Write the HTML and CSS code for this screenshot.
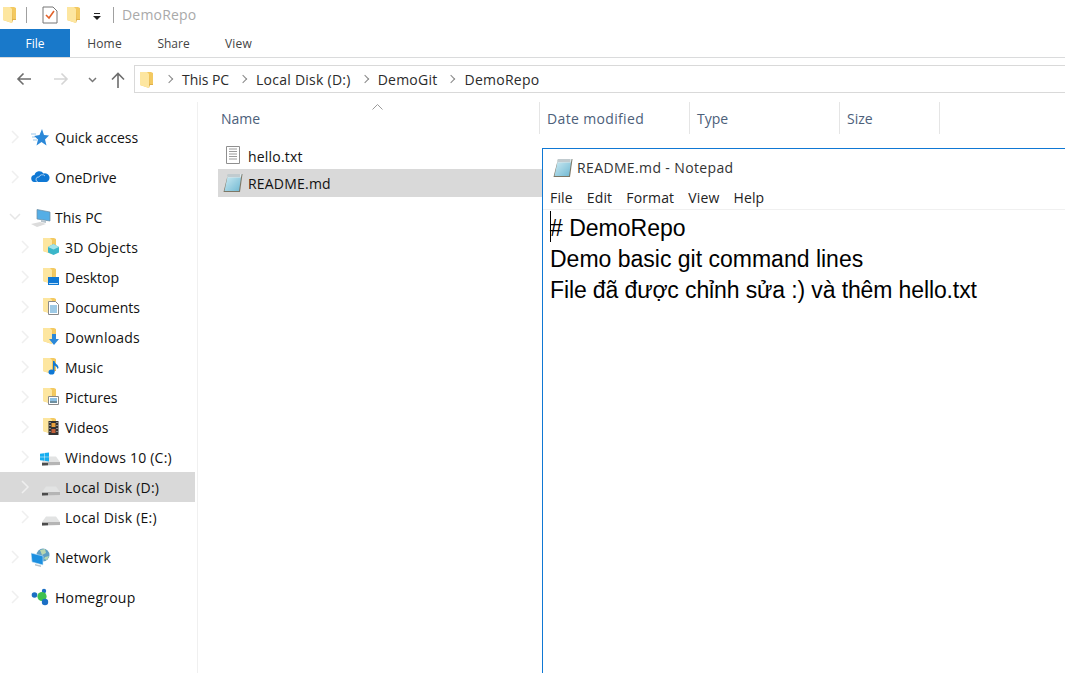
FILE: index.html
```html
<!DOCTYPE html>
<html lang="en">
<head>
    <meta charset="UTF-8">
    <meta name="viewport" content="width=device-width, initial-scale=1.0">
    <title>DemoRepo</title>
    <link rel="stylesheet" href="styles.css">
</head>
<body>

    <!-- Shared icons -->
    <svg class="defs" width="0" height="0">
        <defs>
            <linearGradient id="padfill" x1="0" y1="0" x2="1" y2="1">
                <stop offset="0" stop-color="#d4eef5"/>
                <stop offset="1" stop-color="#6fb8d2"/>
            </linearGradient>
            <symbol id="folder" viewBox="0 0 13 17">
                <path d="M0 1h11l2 1v12H9v3l-9-3z" fill="#f3c961"/>
                <path d="M0 1h7l2 2v14l-9-3z" fill="#fde6a0"/>
                <path d="M9 3v14l1-3h3v-1H9.500z" fill="#e0b04a"/>
            </symbol>
            <symbol id="drive" viewBox="0 0 20 12">
                <path d="M5 1.500h10l4 5.500H1z" fill="#e2e3e3"/>
                <path d="M1 7h18v3L1 10.500z" fill="#b5b5b5"/>
                <path d="M1 8h6v2.300L1 10.500z" fill="#4c4c4c"/>
            </symbol>
            <symbol id="note" viewBox="0 0 20 20">
                <path d="M5 1h14.500L17 19H.5z" fill="#7d7766"/>
                <path d="M5 1h13.500L16 18H1.500z" fill="url(#padfill)"/>
                <path d="M5 1h13.500l-.6 3.500H4.300z" fill="#dfe6e8"/>
                <path d="M6 1v3M8 1v3M10 1v3M12 1v3M14 1v3M16 1v3" stroke="#8a9aa0" stroke-width=".7"/>
            </symbol>
            <symbol id="chev-r" viewBox="0 0 10 16">
                <path d="M2 2l6 6-6 6" fill="none" stroke="#efefef" stroke-width="1.500"/>
            </symbol>
        </defs>
    </svg>

    <header class="titlebar">
        <svg class="folder-ico first" width="13" height="17"><use href="#folder"/></svg>
        <span class="tb-sep sep-a"></span>
        <svg class="check" width="16" height="18" viewBox="0 0 16 18">
            <path d="M1 1h10l4 4v12H1z" fill="#fff" stroke="#777"/>
            <path d="M4 9l3 3 5-7" fill="none" stroke="#e2622b" stroke-width="1.600"/>
        </svg>
        <svg class="folder-ico qa-folder" width="13" height="17"><use href="#folder"/></svg>
        <svg class="qa-drop" width="8" height="7" viewBox="0 0 8 7">
            <path d="M1 0h6v1H1zM0 3h8L4 7z" fill="#222"/>
        </svg>
        <span class="tb-sep sep-b"></span>
        <span class="win-title">DemoRepo</span>
    </header>

    <nav class="ribbon">
        <span class="tab tab-file">File</span>
        <span class="tab tab-home">Home</span>
        <span class="tab tab-share">Share</span>
        <span class="tab tab-view">View</span>
    </nav>

    <div class="addressrow">
        <svg class="nav-arrow back" width="16" height="14" viewBox="0 0 16 14">
            <path d="M15 7H2M7.500 1.500L2 7l5.500 5.500" fill="none" stroke="#6d6d6d" stroke-width="1.600"/>
        </svg>
        <svg class="nav-arrow forward" width="16" height="14" viewBox="0 0 16 14">
            <path d="M1 7h13M8.500 1.500L14 7l-5.500 5.500" fill="none" stroke="#d5d5d5" stroke-width="1.600"/>
        </svg>
        <svg class="nav-arrow recent" width="9" height="6" viewBox="0 0 9 6">
            <path d="M1 1l3.500 3.500L8 1" fill="none" stroke="#777" stroke-width="1.500"/>
        </svg>
        <svg class="nav-arrow up" width="14" height="16" viewBox="0 0 14 16">
            <path d="M7 16V2M1 7.500L7 1.500l6 6" fill="none" stroke="#6d6d6d" stroke-width="1.600"/>
        </svg>
        <div class="addressbar">
            <svg class="folder-ico" width="13" height="17"><use href="#folder"/></svg>
            <span class="crumb-sep first-sep"></span><span class="crumb-pc">This PC</span>
            <span class="crumb-sep"></span><span>Local Disk (D:)</span>
            <span class="crumb-sep"></span><span>DemoGit</span>
            <span class="crumb-sep"></span><span>DemoRepo</span>
        </div>
    </div>

    <main class="explorer">
        <aside class="sidebar">
            <div class="tree-item top">
                <svg class="chev" width="10" height="16"><use href="#chev-r"/></svg>
                <svg class="tree-ico" width="18" height="17" viewBox="0 0 18 17">
                    <path d="M11 0l2 6 5 .5-4 4 1.500 6-5-3.500-5 3.500L7 10.500 3 7l5.500-1z" fill="#2b88d8"/>
                    <path d="M0 5h5M1 8h3M2 11h4" stroke="#9cc7ea"/>
                </svg>
                <span>Quick access</span>
            </div>
            <div class="tree-item top">
                <svg class="chev" width="10" height="16"><use href="#chev-r"/></svg>
                <svg class="tree-ico cloud" width="19" height="12" viewBox="0 0 19 12">
                    <path d="M4 12a3.500 3.500 0 0 1-.5-7A5 5 0 0 1 12.500 3.500 4 4 0 0 1 15.500 12z" fill="#0f78d4"/>
                    <path d="M7 12a2.500 2.500 0 0 1 1-5 3.500 3.500 0 0 1 6-1" fill="none" stroke="#fff" stroke-width=".6"/>
                </svg>
                <span>OneDrive</span>
            </div>
            <div class="tree-item top open">
                <svg class="chev-down" width="12" height="8" viewBox="0 0 12 8">
                    <path d="M1 1l5 5 5-5" fill="none" stroke="#e6e6e6" stroke-width="1.500"/>
                </svg>
                <svg class="tree-ico" width="20" height="18" viewBox="0 0 20 18">
                    <path d="M6 .500L19 3v9L6 10z" fill="#55aee6" stroke="#6c8ba0" stroke-width=".7"/>
                    <path d="M10 11l5 1v2l-5-1z" fill="#b8c4cc"/>
                    <path d="M0 15l9-2 6 2-9 3z" fill="#dcdcdc"/>
                </svg>
                <span>This PC</span>
            </div>

            <div class="tree-item sub">
                <svg class="chev" width="10" height="16"><use href="#chev-r"/></svg>
                <span class="lib-ico">
                    <svg width="13" height="17"><use href="#folder"/></svg>
                    <svg class="badge" width="11" height="11" viewBox="0 0 11 11">
                        <path d="M5.500 0L11 3v5.500L5.500 11 0 8.500V3z" fill="#3bb6c9"/>
                        <path d="M5.500 0L11 3 5.500 5.500 0 3z" fill="#a3e3ea"/>
                    </svg>
                </span>
                <span class="wide">3D Objects</span>
            </div>
            <div class="tree-item sub">
                <svg class="chev" width="10" height="16"><use href="#chev-r"/></svg>
                <span class="lib-ico">
                    <svg width="13" height="17"><use href="#folder"/></svg>
                    <svg class="badge" width="11" height="8" viewBox="0 0 11 8">
                        <path d="M0 0h11v8H0z" fill="#0f78d4"/>
                        <path d="M1 6h9v1H1z" fill="#bfe0f5"/>
                    </svg>
                </span>
                <span>Desktop</span>
            </div>
            <div class="tree-item sub">
                <svg class="chev" width="10" height="16"><use href="#chev-r"/></svg>
                <span class="lib-ico">
                    <svg width="13" height="17"><use href="#folder"/></svg>
                    <svg class="badge" width="11" height="14" viewBox="0 0 11 14">
                        <path d="M.5.500h7l3 3v10H.5z" fill="#fff" stroke="#8a8a8a"/>
                        <path d="M2 5h7M2 7h7M2 9h7M2 11h7" stroke="#3c94cc"/>
                    </svg>
                </span>
                <span>Documents</span>
            </div>
            <div class="tree-item sub">
                <svg class="chev" width="10" height="16"><use href="#chev-r"/></svg>
                <span class="lib-ico">
                    <svg width="13" height="17"><use href="#folder"/></svg>
                    <svg class="badge" width="10" height="11" viewBox="0 0 10 11">
                        <path d="M3 0h4v5h3l-5 6-5-6h3z" fill="#2b88d8"/>
                    </svg>
                </span>
                <span class="wide">Downloads</span>
            </div>
            <div class="tree-item sub">
                <svg class="chev" width="10" height="16"><use href="#chev-r"/></svg>
                <span class="lib-ico">
                    <svg width="13" height="17"><use href="#folder"/></svg>
                    <svg class="badge" width="11" height="15" viewBox="0 0 11 15">
                        <ellipse cx="3.500" cy="12" rx="3" ry="2.600" fill="#0f78d4"/>
                        <path d="M5 12V1h1.500c0 3 4 3 4 7l-1 1c0-2-2-3-3-3.500V12z" fill="#0f78d4"/>
                    </svg>
                </span>
                <span>Music</span>
            </div>
            <div class="tree-item sub">
                <svg class="chev" width="10" height="16"><use href="#chev-r"/></svg>
                <span class="lib-ico">
                    <svg width="13" height="17"><use href="#folder"/></svg>
                    <svg class="badge" width="11" height="9" viewBox="0 0 11 9">
                        <path d="M.5.500h10v8H.5z" fill="#fff" stroke="#8a8a8a"/>
                        <path d="M2 2h7v3H2z" fill="#8cc0e4"/>
                        <path d="M2 5h7v2H2z" fill="#6f8f9f"/>
                    </svg>
                </span>
                <span>Pictures</span>
            </div>
            <div class="tree-item sub">
                <svg class="chev" width="10" height="16"><use href="#chev-r"/></svg>
                <span class="lib-ico">
                    <svg width="13" height="17"><use href="#folder"/></svg>
                    <svg class="badge" width="11" height="14" viewBox="0 0 10 14">
                        <path d="M0 0h10v14H0z" fill="#333"/>
                        <path d="M3 2h4v4H3z" fill="#e8a13c"/>
                        <path d="M3 8h4v4H3z" fill="#c2603a"/>
                        <path d="M1 1h1v1H1zM1 4h1v1H1zM1 7h1v1H1zM1 10h1v1H1zM8 1h1v1H8zM8 4h1v1H8zM8 7h1v1H8zM8 10h1v1H8z" fill="#ddd"/>
                    </svg>
                </span>
                <span>Videos</span>
            </div>
            <div class="tree-item sub">
                <svg class="chev" width="10" height="16"><use href="#chev-r"/></svg>
                <span class="lib-ico drive-ico">
                    <svg class="drive-low" width="20" height="12"><use href="#drive"/></svg>
                    <svg class="win-logo" width="9" height="10" viewBox="0 0 10 10">
                        <path d="M0 1.500l4.500-.8v4H0zM5 .6L10 0v4.700H5zM0 5.300h4.500v4L0 8.500zM5 5.300h5V10l-5-.7z" fill="#16aef0"/>
                    </svg>
                </span>
                <span class="wide">Windows 10 (C:)</span>
            </div>
            <div class="tree-item sub selected">
                <svg class="chev" width="10" height="16"><use href="#chev-r"/></svg>
                <span class="lib-ico drive-ico">
                    <svg class="drive-low" width="20" height="12"><use href="#drive"/></svg>
                </span>
                <span class="wide">Local Disk (D:)</span>
            </div>
            <div class="tree-item sub">
                <svg class="chev" width="10" height="16"><use href="#chev-r"/></svg>
                <span class="lib-ico drive-ico">
                    <svg class="drive-low" width="20" height="12"><use href="#drive"/></svg>
                </span>
                <span class="wide">Local Disk (E:)</span>
            </div>

            <div class="tree-item top">
                <svg class="chev" width="10" height="16"><use href="#chev-r"/></svg>
                <svg class="tree-ico low" width="20" height="19" viewBox="0 0 20 19">
                    <circle cx="12" cy="7" r="6.500" fill="#5f9fc4"/>
                    <path d="M9 2l5-1 1 4-4 2zM14 9l4-1-2 4-3-1z" fill="#b8d6b0"/>
                    <path d="M0 5l12 3v9L1 14z" fill="#1b8fe0" stroke="#cfe8f8" stroke-width=".6"/>
                    <path d="M4 16l6 1.500v1.500l-6-1.500z" fill="#b8c4cc"/>
                </svg>
                <span>Network</span>
            </div>
            <div class="tree-item top">
                <svg class="chev" width="10" height="16"><use href="#chev-r"/></svg>
                <svg class="tree-ico low" width="18" height="18" viewBox="0 0 18 18">
                    <circle cx="3.500" cy="7" r="2.800" fill="#1b6fc4"/>
                    <circle cx="13" cy="3" r="2.200" fill="#1b6fc4"/>
                    <circle cx="11" cy="8.500" r="4.600" fill="#3fc04f"/>
                    <circle cx="14" cy="14" r="3.200" fill="#1b6fc4"/>
                </svg>
                <span class="wide">Homegroup</span>
            </div>
        </aside>

        <section class="files">
            <div class="columns">
                <svg class="sort" width="11" height="6" viewBox="0 0 11 6">
                    <path d="M.5 5.500l5-5 5 5" fill="none" stroke="#9a9a9a"/>
                </svg>
                <div class="col col-name">Name</div>
                <div class="col col-date">Date modified</div>
                <div class="col col-type">Type</div>
                <div class="col col-size">Size</div>
            </div>
            <div class="file-row">
                <svg class="file-ico" width="16" height="18" viewBox="0 0 16 18">
                    <path d="M1.500.500h13v17h-13z" fill="#fff" stroke="#8f8f8f"/>
                    <path d="M4 3h8M4 5.500h8M4 8h8M4 10.500h8M4 13h8" stroke="#9a9a9a"/>
                </svg>
                <span class="hello-name">hello.txt</span>
            </div>
            <div class="file-row selected">
                <svg class="file-ico" width="20" height="20"><use href="#note"/></svg>
                <span>README.md</span>
            </div>
        </section>
    </main>

    <!-- Notepad window sits on top of the explorer -->
    <div class="notepad">
        <div class="np-title">
            <svg width="20" height="20"><use href="#note"/></svg>
            <span>README.md - Notepad</span>
        </div>
        <div class="np-menu">
            <span>File</span>
            <span>Edit</span>
            <span>Format</span>
            <span>View</span>
            <span>Help</span>
        </div>
        <div class="np-text">
            <span class="caret"></span>
            <p>
                # DemoRepo
            </p>
            <p>Demo basic git command lines</p>
            <p class="np-long">File đã được chỉnh sửa :) và thêm hello.txt</p>
        </div>
    </div>

</body>
</html>
```

FILE: styles.css
```css
* {
    box-sizing: border-box;
}

html, body {
    height: 100%;
}

body {
    margin: 0;
    overflow: hidden;
    background: #fff;
    color: #1a1a1a;
    font-family: "Open Sans", "Noto Sans", sans-serif;
    font-size: 14px;
}

svg {
    display: block;
    flex: none;
}

.defs {
    position: absolute;
}

/* Title bar */
.titlebar {
    height: 29px;
    display: flex;
    align-items: center;
}

.first {
    margin-left: 3px;
}

.tb-sep {
    width: 1px;
    height: 16px;
    background: #a0a0a0;
}

.sep-a {
    margin-left: 10px;
}

.check {
    margin-left: 15px;
}

.qa-folder {
    margin-left: 9px;
}

.qa-drop {
    margin-left: 13px;
    margin-top: 3px;
}

.sep-b {
    margin-left: 12px;
}

.win-title {
    margin-left: 8px;
    color: #a9a9a9;
    letter-spacing: .2px;
}

/* Ribbon tabs */
.ribbon {
    height: 29px;
    display: flex;
    border-bottom: 1px solid #dadbdc;
    font-size: 12px;
    color: #444;
}

.tab {
    display: flex;
    align-items: center;
    justify-content: center;
    height: 28px;
}

.tab-file {
    width: 70px;
    background: #1979ca;
    color: #fff;
}

.tab-home {
    width: 69px;
    letter-spacing: .2px;
}

.tab-share {
    width: 69px;
}

.tab-view {
    width: 61px;
    letter-spacing: .2px;
}

/* Address row */
.addressrow {
    height: 44px;
    display: flex;
    align-items: center;
    padding: 0 0 2px 16px;
}

.forward {
    margin-left: 21px;
}

.recent {
    margin-left: 19px;
    margin-top: 2px;
}

.up {
    margin-left: 14px;
    margin-top: 2px;
}

.addressbar {
    height: 28px;
    margin-left: 9px;
    flex: 1;
    margin-right: -1px;
    display: flex;
    align-items: center;
    padding-left: 5px;
    border: 1px solid #d9d9d9;
    color: #2b2b2b;
    letter-spacing: .25px;
}

.crumb-pc {
    letter-spacing: -.05px;
}

.crumb-sep {
    width: 6px;
    height: 6px;
    margin-left: 11px;
    margin-right: 10px;
    border-top: 1.500px solid #888;
    border-right: 1.500px solid #888;
    transform: rotate(45deg);
}

.first-sep {
    margin-left: 13px;
}

/* Explorer body */
.explorer {
    display: flex;
    height: 571px;
}

.sidebar {
    width: 198px;
    padding: 20px 2px 0 0;
    border-right: 1px solid #f0f0f0;
}

.tree-item {
    height: 30px;
    display: flex;
    align-items: center;
    position: relative;
    color: #111;
}

.tree-item .wide {
    letter-spacing: .22px;
}

.tree-item.top {
    padding-left: 55px;
    margin-bottom: 10px;
}

.tree-item.open {
    margin-bottom: 0;
}

.tree-item.sub {
    padding-left: 65px;
}

.tree-item.sub + .tree-item.top {
    margin-top: 10px;
}

.tree-item.selected {
    background: #d9d9d9;
}

.chev {
    position: absolute;
    left: 10px;
    top: 7px;
}

.sub .chev {
    left: 20px;
}

.chev-down {
    position: absolute;
    left: 9px;
    top: 11px;
}

.tree-ico {
    position: absolute;
    left: 31px;
    top: 7px;
}

.tree-ico.cloud {
    top: 8px;
}

.tree-ico.low {
    top: 6px;
}

.lib-ico {
    position: absolute;
    left: 43px;
    top: 5px;
    width: 16px;
    height: 18px;
}

.badge {
    position: absolute;
    right: 0;
    bottom: 0;
}

.drive-ico {
    left: 40px;
    width: 22px;
}

.drive-low {
    position: absolute;
    left: 1px;
    bottom: -2px;
}

.win-logo {
    position: absolute;
    left: 0;
    top: 5px;
}

/* File list */
.files {
    flex: 1;
    position: relative;
    padding-left: 20px;
}

.columns {
    height: 39px;
    display: flex;
    color: #4c607a;
    margin-left: -20px;
}

.sort {
    position: absolute;
    left: 174px;
    top: 2px;
}

.col {
    height: 32px;
    display: flex;
    align-items: center;
    padding-left: 7px;
    border-right: 1px solid #e5e5e5;
    width: 150px;
}

.col-name {
    width: 342px;
    padding-left: 23px;
}

.col-date {
    letter-spacing: .35px;
}

.col-size {
    width: 100px;
}

.file-row {
    height: 28px;
    display: flex;
    align-items: center;
    color: #111;
    letter-spacing: .2px;
}

.file-row.selected {
    background: #d9d9d9;
    width: 330px;
}

.hello-name {
    margin-top: 2px;
}

.file-ico {
    margin: 0 7px 0 7px;
}

.file-row.selected .file-ico {
    margin: 0 5px 0 5px;
}

/* Notepad window */
.notepad {
    position: absolute;
    left: 542px;
    top: 148px;
    width: 540px;
    height: 540px;
    background: #fff;
    border: 1px solid #0f78d4;
}

.np-title {
    height: 37px;
    display: flex;
    align-items: center;
    gap: 4px;
    padding-left: 10px;
    color: #333;
    letter-spacing: .37px;
}

.np-menu {
    height: 24px;
    display: flex;
    align-items: center;
    gap: 14px;
    padding-left: 7px;
    border-bottom: 1px solid #f0f0f0;
    color: #222;
    letter-spacing: .15px;
}

.np-text {
    position: relative;
    padding: 3px 0 0 7px;
    font-family: "Liberation Sans", Arial, sans-serif;
    font-size: 23px;
    color: #000;
}

.np-text p {
    margin: 0;
    height: 31px;
    line-height: 31px;
}

.np-long {
    letter-spacing: -.12px;
}

.caret {
    position: absolute;
    left: 7px;
    top: 1px;
    width: 1px;
    height: 31px;
    background: #000;
}
```
